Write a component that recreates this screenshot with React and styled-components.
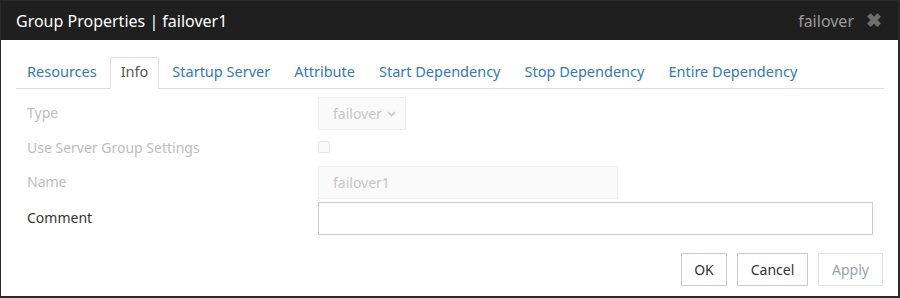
import React from 'react';
import styled, { createGlobalStyle } from 'styled-components';

const Global = createGlobalStyle`
  html, body { margin: 0; padding: 0; background: #fff; }
  body { font-family: "Noto Sans", "Open Sans", Arial, sans-serif; }
  * { box-sizing: border-box; }
`

const Dialog = styled.div`
  width: 900px;
  height: 298px;
  border: 1px solid #2a2a2a;
  border-right-width: 2px;
  border-bottom-width: 2px;
  display: flex;
  flex-direction: column;
  background: #fff;
`
const Header = styled.div`
  height: 39px;
  background: #1f1f1f;
  display: flex;
  align-items: center;
  padding: 0 16px 0 15px;
`
const Title = styled.h4`
  margin: 0;
  flex: 1;
  color: #fff;
  font-size: 16px;
  font-weight: normal;
`
const Mode = styled.span`
  color: #9a9a9a;
  font-size: 16px;
  margin-right: 12px;
`
const Close = styled.span`
  color: #6e6e6e;
  font-size: 19px;
  font-weight: bold;
  line-height: 1;
`
const Body = styled.div`
  padding: 17px 14px 0 15px;
  flex: 1;
  display: flex;
  flex-direction: column;
`
const Tabs = styled.ul`
  list-style: none;
  margin: 0;
  padding: 0;
  display: flex;
  border-bottom: 1px solid #ddd;
  height: 32px;
`
const Tab = styled.li`
  flex-shrink: 0;
  margin: 0 2px -1px 0;
  padding: 3px 10px 0;
  height: 32px;
  font-size: 14.5px;
  color: ${p => (p.active ? '#555' : '#337ab7')};
  border: 1px solid ${p => (p.active ? '#ddd' : 'transparent')};
  border-bottom-color: ${p => (p.active ? '#fff' : 'transparent')};
  background: ${p => (p.active ? '#fff' : 'transparent')};
  border-radius: 2px 2px 0 0;
  white-space: nowrap;
`
const Form = styled.div`
  display: grid;
  grid-template-columns: 291px 1fr;
  padding: 8px 12px 0 11px;
  align-items: center;
  row-gap: 3px;
`
const Label = styled.label`
  font-size: 14px;
  line-height: 18px;
  margin-bottom: ${p => (p.check ? 0 : 1)}px;
  color: ${p => (p.disabled ? '#bdbdbd' : '#333')};
`
const SelectBox = styled.div`
  width: 88px;
  height: 33px;
  border: 1px solid #eee;
  background: #fafafa;
  color: #c6c6c6;
  font-size: 14px;
  display: flex;
  align-items: center;
  padding: 0 6px 0 14px;
  gap: 5px;
`
const CheckCell = styled.div`
  height: 30px;
  display: flex;
  align-items: center;
`
const Check = styled.div`
  width: 12px;
  height: 12px;
  border: 1px solid #e6e6e6;
  border-radius: 2px;
  background: #fafafa;
  margin-bottom: 3px;
`
const TextBox = styled.div`
  width: ${p => p.width};
  height: 33px;
  border: 1px solid ${p => (p.disabled ? '#eee' : '#ccc')};
  background: ${p => (p.disabled ? '#fafafa' : '#fff')};
  color: #c6c6c6;
  font-size: 14px;
  display: flex;
  align-items: center;
  padding: 0 14px;
`
const Footer = styled.div`
  display: flex;
  justify-content: flex-end;
  gap: 10px;
  padding: 18px 1px 0 0;
`
const Button = styled.button`
  height: 33px;
  width: ${p => p.w}px;
  padding: 0;
  border: 1px solid ${p => (p.disabled ? '#e2e2e2' : '#ccc')};
  background: #fff;
  color: ${p => (p.disabled ? '#9aa3ad' : '#333')};
  font-size: 14px;
  font-family: inherit;
  border-radius: 0;
`

const tabs = ['Resources', 'Info', 'Startup Server', 'Attribute', 'Start Dependency', 'Stop Dependency', 'Entire Dependency']

export default function App() {
  return (
    <>
      <Global />
      <Dialog>
        <Header>
          <Title>Group Properties | failover1</Title>
          <Mode>failover</Mode>
          <Close>✖</Close>
        </Header>
        <Body>
          <Tabs>
            {tabs.map(t => (
              <Tab key={t} active={t === 'Info'}>{t}</Tab>
            ))}
          </Tabs>
          <Form>
            <Label disabled>Type</Label>
            <div>
              <SelectBox>
                failover
                <svg width="9" height="6" viewBox="0 0 9 6">
                  <path d="M1 1l3.5 3.5L8 1" fill="none" stroke="#c6c6c6" strokeWidth="1.6" />
                </svg>
              </SelectBox>
            </div>
            <Label disabled check>Use Server Group Settings</Label>
            <CheckCell>
              <Check />
            </CheckCell>
            <Label disabled>Name</Label>
            <TextBox disabled width="300px">failover1</TextBox>
            <Label>Comment</Label>
            <TextBox width="555px" />
          </Form>
          <Footer>
            <Button w={46}>OK</Button>
            <Button w={71}>Cancel</Button>
            <Button w={65} disabled>Apply</Button>
          </Footer>
        </Body>
      </Dialog>
    </>
  )
}
